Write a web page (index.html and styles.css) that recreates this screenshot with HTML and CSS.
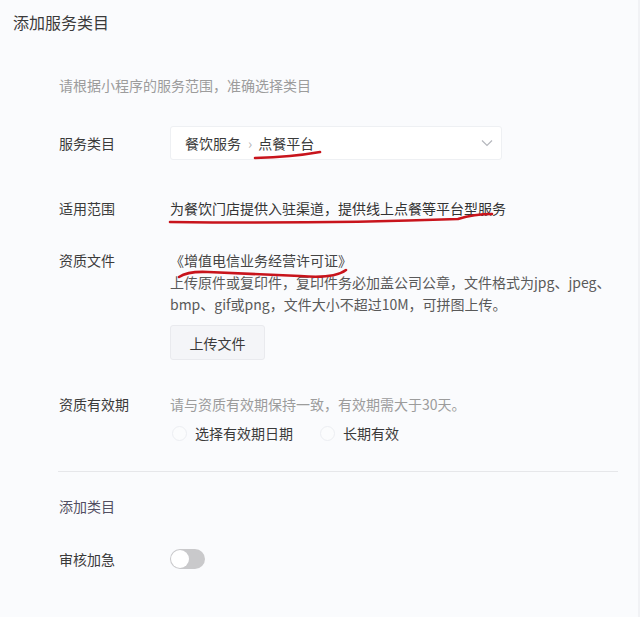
FILE: index.html
```html
<!DOCTYPE html>
<html lang="zh-CN">
<head>
<meta charset="utf-8">
<title>添加服务类目</title>
<link rel="stylesheet" href="styles.css">
</head>
<body>
<div class="page">
  <h1 class="title">添加服务类目</h1>
  <p class="hint">请根据小程序的服务范围，准确选择类目</p>

  <div class="row row-select">
    <div class="label">服务类目</div>
    <div class="select">
      <span class="crumb">餐饮服务</span>
      <span class="sep">›</span>
      <span class="crumb">点餐平台</span>
      <svg class="chev" width="12" height="8" viewBox="0 0 12 8"><path d="M1 1.5 L6 6.5 L11 1.5" fill="none" stroke="#b5b7bd" stroke-width="1.2"/></svg>
    </div>
  </div>

  <div class="row row-scope">
    <div class="label">适用范围</div>
    <div class="value">为餐饮门店提供入驻渠道，提供线上点餐等平台型服务</div>
  </div>

  <div class="row row-file">
    <div class="label">资质文件</div>
    <div class="value">
      <div class="doc">《增值电信业务经营许可证》</div>
      <div class="desc">上传原件或复印件，复印件务必加盖公司公章，文件格式为jpg、jpeg、<br>bmp、gif或png，文件大小不超过10M，可拼图上传。</div>
      <button class="btn">上传文件</button>
    </div>
  </div>

  <div class="row row-valid">
    <div class="label">资质有效期</div>
    <div class="value">
      <div class="muted">请与资质有效期保持一致，有效期需大于30天。</div>
      <div class="radios">
        <label class="radio"><span class="dot"></span>选择有效期日期</label>
        <label class="radio"><span class="dot"></span>长期有效</label>
      </div>
    </div>
  </div>

  <div class="divider"></div>

  <div class="row row-add">
    <div class="label add">添加类目</div>
  </div>

  <div class="row row-urgent">
    <div class="label">审核加急</div>
    <div class="toggle"><span class="knob"></span></div>
  </div>

  <svg class="marks" width="640" height="617" viewBox="0 0 640 617">
    <path d="M255 158 Q292 157 320 152" />
    <path d="M170 222 Q320 224 458 219 Q474 214 492 214" />
    <path d="M179 277 Q188 271 208 272 L300 276 Q334 279 346 270" />
  </svg>
</div>
</body>
</html>
```

FILE: styles.css
```css
html, body {
  margin: 0;
  padding: 0;
}
body {
  background: #fafbfd;
  font-family: "Noto Sans CJK SC", "Noto Sans", sans-serif;
  font-size: 14px;
  color: #3a3a3a;
}
.page {
  position: relative;
  width: 640px;
  height: 617px;
  box-sizing: border-box;
  padding-top: 11px;
  border-right: 2px solid #f1f2f5;
  overflow: hidden;
}
.title {
  margin: 0 0 0 13px;
  font-size: 16px;
  font-weight: normal;
  line-height: 22px;
  color: #3a3a3a;
}
.hint {
  margin: 41px 0 0 59px;
  line-height: 22px;
  color: #9c9c9c;
}
.row {
  display: flex;
  padding-left: 59px;
  line-height: 22px;
}
.label {
  width: 111px;
  flex: none;
  color: #3a3a3a;
}
.label.add {
  color: #524f62;
}
.value {
  color: #333;
}
.row-select {
  margin-top: 30px;
  align-items: center;
}
.select {
  display: flex;
  align-items: center;
  box-sizing: border-box;
  width: 332px;
  height: 34px;
  padding: 0 8px 0 14px;
  background: #fff;
  border: 1px solid #eef0f3;
  border-radius: 3px;
}
.crumb {
  color: #3a3a3a;
}
.sep {
  color: #b3b3b3;
  margin: 0 6px 0 7px;
}
.chev {
  margin-left: auto;
}
.row-scope {
  margin-top: 37px;
}
.row-file {
  margin-top: 30px;
}
.doc {
  color: #444;
}
.desc {
  color: #595959;
}
.btn {
  display: block;
  margin-top: 10px;
  width: 95px;
  height: 35px;
  padding: 0;
  background: #f4f5f8;
  border: 1px solid #e9eaee;
  border-radius: 3px;
  font-family: inherit;
  font-size: 14px;
  color: #3a3a3a;
}
.row-valid {
  margin-top: 33px;
}
.muted {
  color: #9c9c9c;
}
.radios {
  display: flex;
  margin-top: 7px;
}
.radio {
  display: flex;
  align-items: center;
  color: #3a3a3a;
  margin-right: 25px;
}
.dot {
  box-sizing: border-box;
  width: 15px;
  height: 15px;
  margin: 0 8px 0 2px;
  border: 1px solid #eceef2;
  border-radius: 50%;
  background: #fbfcfd;
}
.divider {
  margin: 27px 20px 0 58px;
  height: 1px;
  background: #e6e7ea;
}
.row-add {
  margin-top: 23px;
}
.row-urgent {
  margin-top: 31px;
  align-items: center;
}
.toggle {
  position: relative;
  width: 35px;
  height: 20px;
  border-radius: 10px;
  background: #c9c9cb;
}
.knob {
  position: absolute;
  left: 1px;
  top: 1px;
  width: 18px;
  height: 18px;
  border-radius: 50%;
  background: #fff;
}
.marks {
  position: absolute;
  left: 0;
  top: 0;
  pointer-events: none;
}
.marks path {
  fill: none;
  stroke: #c8141c;
  stroke-width: 2.6;
  stroke-linecap: round;
}
```
